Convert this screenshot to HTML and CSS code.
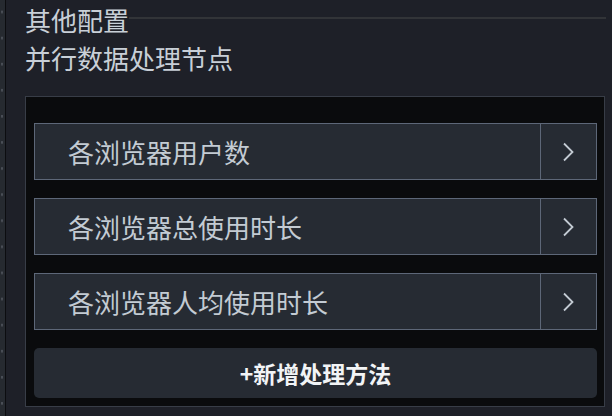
FILE: index.html
```html
<!DOCTYPE html>
<html lang="zh-CN">
<head>
    <meta charset="UTF-8">
    <title>其他配置</title>
    <link rel="stylesheet" href="styles.css">
</head>
<body>
    <div class="page">
        <div class="rail"></div>
        <div class="panel">
            <div class="section-title">
                <span>其他配置</span>
                <div class="section-line"></div>
            </div>
            <div class="node-name">并行数据处理节点</div>

            <div class="method-box">
                <div class="method">
                    <div class="method-name">各浏览器用户数</div>
                    <div class="method-arrow">
                        <svg width="13" height="20" viewBox="0 0 13 20"><path d="M2 1.5 L10.5 10 L2 18.5" fill="none" stroke="#c3cbd3" stroke-width="1.8"/></svg>
                    </div>
                </div>
                <div class="method">
                    <div class="method-name">各浏览器总使用时长</div>
                    <div class="method-arrow">
                        <svg width="13" height="20" viewBox="0 0 13 20"><path d="M2 1.5 L10.5 10 L2 18.5" fill="none" stroke="#c3cbd3" stroke-width="1.8"/></svg>
                    </div>
                </div>
                <div class="method">
                    <div class="method-name">各浏览器人均使用时长</div>
                    <div class="method-arrow">
                        <svg width="13" height="20" viewBox="0 0 13 20"><path d="M2 1.5 L10.5 10 L2 18.5" fill="none" stroke="#c3cbd3" stroke-width="1.8"/></svg>
                    </div>
                </div>
                <button class="add-btn">+新增处理方法</button>
            </div>
        </div>
    </div>
</body>
</html>
```

FILE: styles.css
```css
html, body {
    margin: 0;
    padding: 0;
    background: #1e2028;
}
body {
    font-family: "Noto Sans CJK SC", "Noto Sans", sans-serif;
    color: #c8cfd7;
}
.page {
    display: flex;
    height: 416px;
    overflow: hidden;
}
.rail {
    width: 5px;
    flex-shrink: 0;
    border-right: 1px solid #0c0d10;
    background-color: #262a30;
    background-image: radial-gradient(circle at 2px 12px, #4a4f57 1px, transparent 1.5px);
    background-size: 5px 26.1px;
}
.panel {
    flex: 1;
    padding: 0 7px 0 19px;
}
.section-title {
    display: flex;
    align-items: flex-start;
    font-size: 26px;
    line-height: 38px;
    height: 38px;
    margin-top: 1px;
}
.section-line {
    flex: 1;
    height: 2px;
    margin-top: 16px;
    margin-right: -1px;
    background: #323438;
}
.node-name {
    font-size: 26px;
    line-height: 38px;
}
.method-box {
    margin-top: 19px;
    background: #0a0b0d;
    border: 1px solid #383d47;
    padding: 26px 7px 8px 8px;
    display: flex;
    flex-direction: column;
    gap: 18px;
}
.method {
    display: flex;
    height: 55px;
    background: #262b33;
    border: 1px solid #5d6778;
}
.method-name {
    flex: 1;
    padding-left: 33px;
    font-size: 26px;
    line-height: 55px;
    color: #c3cbd3;
}
.method-arrow {
    width: 55px;
    border-left: 1px solid #5d6778;
    display: flex;
    align-items: center;
    justify-content: center;
}
.add-btn {
    height: 50px;
    border: none;
    border-radius: 5px;
    background: #262b33;
    color: #f2f4f6;
    font-family: "Noto Sans CJK SC", "Noto Sans", sans-serif;
    font-size: 23px;
    font-weight: bold;
    cursor: pointer;
}
```
